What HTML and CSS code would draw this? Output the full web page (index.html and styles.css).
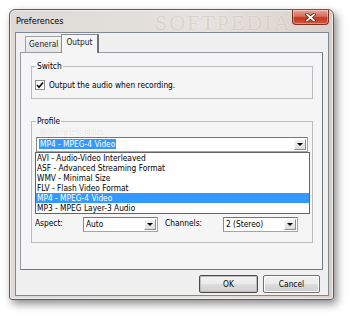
FILE: index.html
```html
<!DOCTYPE html>
<html>
<head>
<meta charset="utf-8">
<link rel="stylesheet" href="styles.css">
</head>
<body>
<div class="window">
  <div class="titlebar">
    <span class="title">Preferences</span>
    <span class="wm-title">SOFTPEDIA</span>
    <div class="close">
      <svg width="11" height="9" viewBox="0 0 11 9"><path d="M2 1.5 L9 7.5 M9 1.5 L2 7.5" stroke="#5a2418" stroke-width="3.4" stroke-linecap="square" fill="none"/><path d="M2 1.5 L9 7.5 M9 1.5 L2 7.5" stroke="#fff" stroke-width="1.8" stroke-linecap="square" fill="none"/></svg>
    </div>
  </div>
  <div class="client">
    <div class="tabs">
      <div class="tab">General</div>
      <div class="tab active">Output</div>
    </div>
    <div class="panel">
      <fieldset class="group switch">
        <legend>Switch</legend>
        <div class="check">
          <span class="box"><svg width="8" height="8" viewBox="0 0 8 8"><path d="M1 4 L3 6.2 L7 1.5" stroke="#111" stroke-width="1.7" fill="none"/></svg></span>
          <span>Output the audio when recording.</span>
        </div>
      </fieldset>
      <fieldset class="group profile">
        <legend>Profile</legend>
        <span class="wm-profile">SOFTPEDIA</span>
        <div class="combo-wrap">
          <div class="combo wide">
            <span class="value"><span class="sel">MP4 - MPEG-4 Video</span></span>
            <span class="drop"><i></i></span>
          </div>
          <div class="list">
            <div class="item">AVI - Audio-Video Interleaved</div>
            <div class="item">ASF - Advanced Streaming Format</div>
            <div class="item">WMV - Minimal Size</div>
            <div class="item">FLV - Flash Video Format</div>
            <div class="item on">MP4 - MPEG-4 Video</div>
            <div class="item">MP3 - MPEG Layer-3 Audio</div>
          </div>
        </div>
        <div class="row">
          <span></span>
          <div class="combo"><span class="value"></span><span class="drop"><i></i></span></div>
          <span></span><span></span>
          <div class="combo"><span class="value"></span><span class="drop"><i></i></span></div>
        </div>
        <div class="row">
          <span></span>
          <div class="combo"><span class="value"></span><span class="drop"><i></i></span></div>
          <span></span><span></span>
          <div class="combo"><span class="value"></span><span class="drop"><i></i></span></div>
        </div>
        <div class="row">
          <span></span>
          <div class="combo"><span class="value"></span><span class="drop"><i></i></span></div>
          <span></span><span></span>
          <div class="combo"><span class="value"></span><span class="drop"><i></i></span></div>
        </div>
        <div class="row">
          <span class="lbl">Aspect:</span>
          <div class="combo"><span class="value">Auto</span><span class="drop"><i></i></span></div>
          <span></span>
          <span class="lbl">Channels:</span>
          <div class="combo"><span class="value">2 (Stereo)</span><span class="drop"><i></i></span></div>
        </div>
      </fieldset>
    </div>
    <div class="buttons">
      <div class="btn ok">OK</div>
      <div class="btn cancel">Cancel</div>
    </div>
  </div>
</div>
</body>
</html>
```
FILE: styles.css
```css
* { box-sizing: border-box; }
html, body { margin: 0; background: #fff; }
body {
  padding: 9px 0 0 9px;
  height: 319px;
  overflow: hidden;
  font-family: "DejaVu Sans Condensed", "DejaVu Sans", sans-serif;
  font-stretch: condensed;
  font-size: 8.3px;
  color: #000;
}
.window {
  width: 325px;
  height: 291px;
  border: 1px solid #5c5c5c;
  border-radius: 6px 6px 3px 3px;
  background: linear-gradient(to right, #dcd9d6 0%, #e6e2de 60%, #d9d0ca 100%);
  box-shadow: 3px 4px 9px rgba(0,0,0,.45), inset 0 0 0 1px rgba(255,255,255,.55);
  padding: 0 4px 3px 5px;
  display: flex;
  flex-direction: column;
}
.titlebar {
  height: 22px;
  display: flex;
  align-items: flex-start;
  position: relative;
}
.title {
  font-size: 9px;
  line-height: 10px;
  margin: 6px 0 0 1px;
  position: relative;
  z-index: 1;
}
.wm-title {
  position: absolute;
  left: 140px;
  top: 0;
  font-family: "Liberation Serif", serif;
  font-size: 22px;
  letter-spacing: 2px;
  color: rgba(170,150,130,.3);
  text-shadow: 0 0 2px rgba(255,255,255,.6);
}
.close {
  margin-left: auto;
  width: 37px;
  height: 15px;
  border: 1px solid #7b3226;
  border-top: none;
  border-radius: 0 0 4px 4px;
  background: linear-gradient(#e9a597 0%, #d86e5c 45%, #c4381f 55%, #d3553a 100%);
  box-shadow: inset 0 0 0 1px rgba(255,255,255,.35);
  display: flex;
  align-items: center;
  justify-content: center;
  position: relative;
  z-index: 1;
}
.client {
  flex: 1;
  border: 1px solid #7f8890;
  background: #f0f0f0;
  padding: 2px 5px 2px 4px;
  display: flex;
  flex-direction: column;
}
.tabs {
  display: flex;
  align-items: flex-end;
  padding-left: 5px;
  height: 18px;
  margin-bottom: -1px;
  position: relative;
  z-index: 1;
}
.tab {
  height: 16px;
  padding: 0 3px;
  border: 1px solid #9ea3a8;
  border-bottom: none;
  background: linear-gradient(#f4f4f4, #e4e4e4);
  line-height: 14px;
  margin-bottom: 1px;
  color: #222;
}
.tab.active {
  height: 19px;
  margin-bottom: 0;
  padding: 0 5px 0 4px;
  margin-left: -1px;
  background: #f5f5f5;
  border-color: #898c95;
  border-right: 2px solid #6f7378;
  line-height: 15px;
}
.panel {
  flex: 1;
  border: 1px solid #989ca2;
  border-right-color: #74787d;
  border-bottom-color: #74787d;
  background: #f5f5f5;
  padding: 8px 9px 0 10px;
  display: flex;
  flex-direction: column;
  gap: 17px;
}
.group {
  margin: 0;
  border: 1px solid #b9bdc1;
  padding: 0 4px;
  position: relative;
}
.group legend {
  padding: 0 1px;
  margin-left: 0;
  line-height: 10px;
}
.switch { height: 38px; }
.check {
  display: flex;
  align-items: center;
  gap: 4px;
  margin: 9px 0 0 -1px;
  line-height: 10px;
}
.box {
  width: 10px;
  height: 10px;
  border: 1px solid #8e8f8f;
  background: #fff;
  display: flex;
  align-items: center;
  justify-content: center;
}
.profile {
  height: 127px;
  padding-top: 11px;
}
.wm-profile {
  position: absolute;
  left: 8px;
  top: 2px;
  font-family: "Liberation Sans", sans-serif;
  font-weight: bold;
  font-size: 9px;
  letter-spacing: 1.5px;
  line-height: 9px;
  color: rgba(255,255,255,.9);
  text-shadow: 0 0 1px rgba(0,0,0,.22);
}
.combo-wrap { position: relative; }
.combo {
  height: 15px;
  display: flex;
  background: #fff;
  border: 1px solid #a5a5a5;
  border-top-color: #777;
  border-left-color: #8a8a8a;
}
.combo .value {
  flex: 1;
  line-height: 13px;
  padding-left: 2px;
  white-space: nowrap;
  overflow: hidden;
}
.sel {
  background: #3399ff;
  color: #fff;
  padding: 0 1px;
  display: inline-block;
  line-height: 10px;
  margin-top: 1px;
}
.drop {
  width: 12px;
  margin: 1px;
  border: 1px solid;
  border-color: #fdfdfd #8d8d8d #8d8d8d #fdfdfd;
  background: linear-gradient(#f3f3f3, #dcdcdc);
  display: flex;
  align-items: center;
  justify-content: center;
}
.drop i {
  width: 0;
  height: 0;
  border-left: 3px solid transparent;
  border-right: 3px solid transparent;
  border-top: 3px solid #000;
}
.list {
  position: absolute;
  top: 100%;
  left: -1px;
  right: -2px;
  z-index: 2;
  background: #fff;
  border: 1px solid #646464;
  padding: 0;
}
.item {
  height: 10px;
  line-height: 10px;
  padding-left: 1px;
  white-space: nowrap;
}
.item.on { background: #3399ff; color: #fff; }
.row {
  display: grid;
  grid-template-columns: 48px 75px 7px 58px 75px;
  align-items: center;
  margin: 5px 0 0 -1px;
}
.lbl { line-height: 10px; margin-top: -3px; }
.buttons {
  display: flex;
  justify-content: flex-end;
  gap: 5px;
  margin-top: 5px;
  padding-right: 3px;
}
.btn {
  height: 18px;
  border: 1px solid #707070;
  border-radius: 2px;
  background: linear-gradient(#f2f2f2 0%, #ebebeb 50%, #dddddd 51%, #cfcfcf 100%);
  box-shadow: inset 0 0 0 1px #fcfcfc;
  display: flex;
  align-items: center;
  justify-content: center;
  line-height: 10px;
}
.btn.ok { width: 59px; border-color: #4a4a4a; box-shadow: inset 0 0 0 1px #bdbdbd; }
.btn.cancel { width: 57px; }
```
